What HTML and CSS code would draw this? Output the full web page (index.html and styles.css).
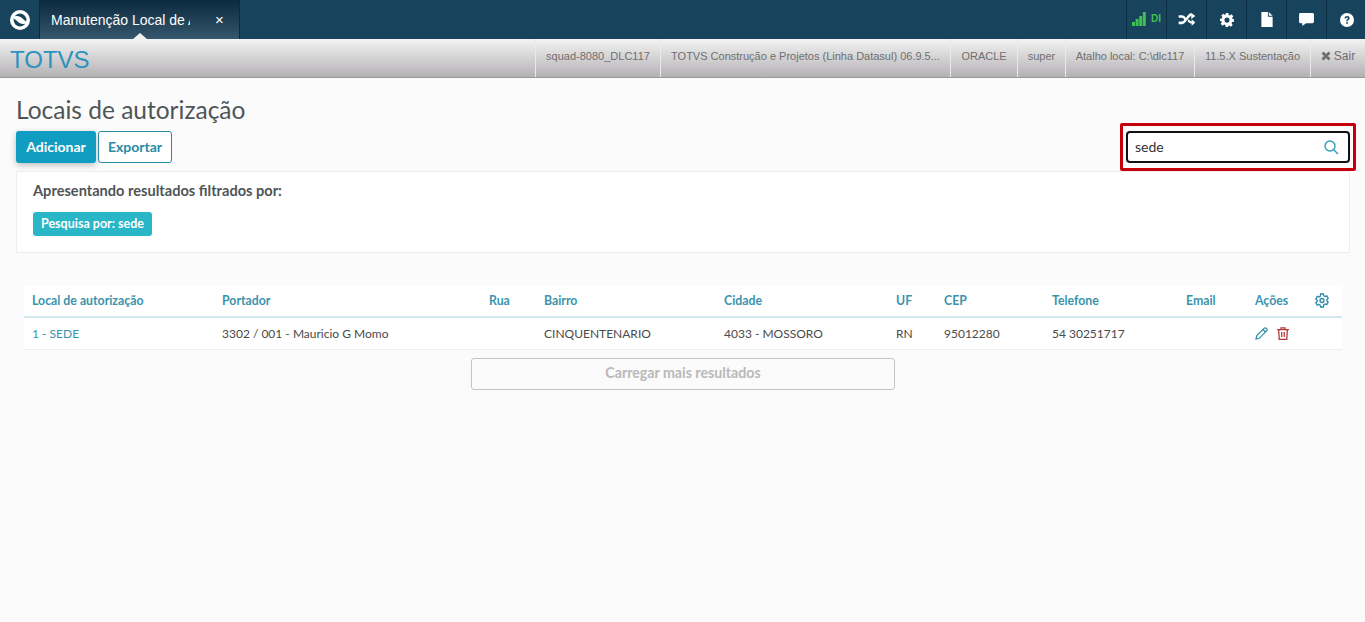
FILE: index.html
```html
<!DOCTYPE html>
<html lang="pt-BR">
<head>
    <meta charset="UTF-8">
    <title>Locais de autorização</title>
    <link rel="stylesheet" href="styles.css">
</head>
<body>
    <header class="topbar">
        <div class="logo-cell">
            <svg width="22" height="22" viewBox="0 0 22 22">
                <circle cx="11" cy="11" r="10" fill="#fff"/>
                <circle cx="11" cy="11" r="6.400" fill="#17435c"/>
                <path d="M3 8.800C7 5.800 11 7 13.500 9.500 15 11 17 12.500 19 13.200 15 16.200 11 15 8.500 12.500 7 11 5 9.500 3 8.800z" fill="#fff"/>
            </svg>
        </div>
        <div class="tab">
            <span class="tab-title">Manutenção Local de A</span>
            <span class="tab-close">×</span>
        </div>
        <div class="top-tools">
            <div class="tool signal">
                <svg width="14" height="14" viewBox="0 0 14 14" fill="#3fc04f">
                    <rect x="0" y="10" width="3" height="4"/>
                    <rect x="3.600" y="7" width="3" height="7"/>
                    <rect x="7.200" y="4" width="3" height="10"/>
                    <rect x="10.800" y="0" width="3" height="14"/>
                </svg>
                <span class="signal-text">DI</span>
            </div>
            <div class="tool">
                <svg width="18" height="13" viewBox="0 0 18 14" fill="#fff">
                    <path d="M0 2.500h3.600c1.600 0 2.600.8 3.600 2L8.600 6.300 7 8.300 5.400 6.200c-.6-.7-1-1-1.800-1H0z"/>
                    <path d="M0 9.200h3.600c.8 0 1.200-.3 1.800-1L10.500 2c1-1.200 2-1.600 3.500-1.600V3.100c-.9 0-1.300.2-1.900.9L7.200 10c-1 1.200-2 2-3.600 2H0z"/>
                    <path d="M13.600 0L18 3.200 13.600 6.400z"/>
                    <path d="M9.500 8.700l1.500-1.900 1.200 1.500c.5.600 1 .9 1.800.9V6.700L18 10.300 14 13.800v-2.400c-1.600 0-2.700-.6-3.500-1.600z"/>
                </svg>
            </div>
            <div class="tool">
                <svg width="14" height="14" viewBox="0 0 16 16" fill="#fff">
                    <path fill-rule="evenodd" d="M6.500 0h3l.4 2.200 1.300.6L13.100 1.500l2.100 2.100-1.300 1.900.6 1.300L16 7v3l-2.200.4-.6 1.300 1.300 1.900-2.100 2.100-1.900-1.300-1.300.6L9.500 16h-3l-.4-2.200-1.300-.6-1.900 1.300L.8 12.400l1.300-1.900-.6-1.300L0 9V6.500l2.200-.4.6-1.300L1.500 2.900 3.600.8l1.900 1.300 1.300-.6z M8 5.200a2.900 2.900 0 1 0 0 5.800 2.900 2.900 0 0 0 0-5.800z"/>
                </svg>
            </div>
            <div class="tool">
                <svg width="12" height="15" viewBox="0 0 12 16" fill="#fff">
                    <path d="M0 0h7v5h5v11H0z"/>
                    <path d="M8 0l4 4H8z"/>
                </svg>
            </div>
            <div class="tool">
                <svg width="15" height="13" viewBox="0 0 16 14" fill="#fff">
                    <path d="M1.500 0h13A1.500 1.500 0 0 1 16 1.500v8a1.500 1.500 0 0 1-1.500 1.500H7.500L3.500 14v-3h-2A1.500 1.500 0 0 1 0 9.500v-8A1.500 1.500 0 0 1 1.500 0z"/>
                </svg>
            </div>
            <div class="tool">
                <svg width="14" height="14" viewBox="0 0 16 16">
                    <circle cx="8" cy="8" r="8" fill="#fff"/>
                    <path d="M5.200 6.200C5.300 4.500 6.500 3.500 8.100 3.500c1.700 0 2.900 1 2.900 2.400 0 1.200-.7 1.700-1.400 2.200-.6.400-.8.700-.8 1.300H7.100c0-1.100.4-1.700 1.100-2.200.6-.4.900-.7.900-1.200 0-.5-.4-.8-1-.8-.7 0-1.100.4-1.200 1z" fill="#17435c"/>
                    <rect x="7.100" y="10.400" width="1.800" height="1.900" fill="#17435c"/>
                </svg>
            </div>
        </div>
    </header>

    <div class="infobar">
        <div class="brand">TOTVS</div>
        <ul class="info-list">
            <li class="w-squad">squad-8080_DLC117</li>
            <li class="w-company">TOTVS Construção e Projetos (Linha Datasul) 06.9.5...</li>
            <li class="w-db">ORACLE</li>
            <li class="w-user">super</li>
            <li class="w-path">Atalho local: C:\dlc117</li>
            <li class="w-version">11.5.X Sustentação</li>
            <li class="w-exit">
                <svg width="10" height="10" viewBox="0 0 10 10"><path d="M1.500 1.500l7 7M8.500 1.500l-7 7" stroke="#6d6d6d" stroke-width="2.800"/></svg>
                Sair
            </li>
        </ul>
    </div>

    <main class="page">
        <h1 class="page-title">Locais de autorização</h1>
        <div class="actions-row">
            <div class="actions">
                <button class="btn btn-primary">Adicionar</button>
                <button class="btn btn-outline">Exportar</button>
            </div>
            <div class="search">
                <span class="search-text">sede</span>
                <svg width="15" height="15" viewBox="0 0 15 15" fill="none" stroke="#2f9fb5" stroke-width="1.400">
                    <circle cx="6" cy="6" r="5"/>
                    <path d="M9.800 9.800L14 14"/>
                </svg>
                <div class="search-mark"></div>
            </div>
        </div>

        <section class="filter-card">
            <div class="filter-title">Apresentando resultados filtrados por:</div>
            <span class="filter-tag">Pesquisa por: sede</span>
        </section>

        <div class="table-wrap">
            <table class="grid">
                <colgroup>
                    <col class="c-local"><col class="c-portador"><col class="c-rua"><col class="c-bairro">
                    <col class="c-cidade"><col class="c-uf"><col class="c-cep"><col class="c-tel">
                    <col class="c-email"><col class="c-acoes"><col class="c-conf">
                </colgroup>
                <thead>
                    <tr>
                        <th>Local de autorização</th>
                        <th>Portador</th>
                        <th>Rua</th>
                        <th>Bairro</th>
                        <th>Cidade</th>
                        <th>UF</th>
                        <th>CEP</th>
                        <th>Telefone</th>
                        <th>Email</th>
                        <th>Ações</th>
                        <th>
                            <svg class="icon-block" width="14" height="15" viewBox="0 0 14 15" fill="none" stroke="#2a8ba6" stroke-width="1.300">
                                <path d="M5.600 1h2.800l.4 1.800 1.300.7 1.700-.6 1.400 2.400-1.300 1.200v1.500l1.300 1.200-1.400 2.400-1.700-.6-1.300.7L8.400 14H5.600l-.4-1.800-1.300-.7-1.700.6L.8 9.700l1.300-1.200V7L.8 5.800l1.400-2.400 1.700.6 1.300-.7z"/>
                                <circle cx="7" cy="7.500" r="2"/>
                            </svg>
                        </th>
                    </tr>
                </thead>
                <tbody>
                    <tr>
                        <td class="link">1 - SEDE</td>
                        <td>3302 / 001 - Mauricio G Momo</td>
                        <td></td>
                        <td>CINQUENTENARIO</td>
                        <td>4033 - MOSSORO</td>
                        <td>RN</td>
                        <td>95012280</td>
                        <td>54 30251717</td>
                        <td></td>
                        <td>
                            <div class="row-actions">
                                <svg width="13" height="13" viewBox="0 0 13 13" fill="none" stroke="#2a8ba6" stroke-width="1.200">
                                    <path d="M1 12l.7-3.200L9.300 1.200a1.300 1.300 0 0 1 1.800 0l.7.7a1.300 1.300 0 0 1 0 1.800L4.200 11.300z"/>
                                    <path d="M8 2.500l2.500 2.500"/>
                                </svg>
                                <svg width="12" height="13" viewBox="0 0 12 13" fill="none" stroke="#b23a3a" stroke-width="1.300">
                                    <path d="M0 2.700h12M4 2.500V.8h4v1.700M1.700 2.700l.5 9.600h7.600l.5-9.600M4.700 5v5M7.300 5v5"/>
                                </svg>
                            </div>
                        </td>
                        <td></td>
                    </tr>
                </tbody>
            </table>
            <button class="load-more">Carregar mais resultados</button>
        </div>
    </main>
</body>
</html>
```

FILE: styles.css
```css
* {
    box-sizing: border-box;
}

html, body {
    height: 100%;
}

body {
    margin: 0;
    background-color: #fbfbfb;
    color: #4a4a4a;
    font-family: 'Lato', 'Noto Sans', sans-serif;
    overflow: hidden;
}

/* barra superior */
.topbar {
    display: flex;
    height: 39px;
    background-color: #17435c;
}

.logo-cell {
    display: flex;
    align-items: center;
    justify-content: center;
    width: 40px;
    border-right: 1px solid #0d2a3c;
}

.tab {
    display: flex;
    align-items: center;
    position: relative;
    width: 200px;
    padding-left: 11px;
    border-right: 1px solid #0d2a3c;
    background: linear-gradient(to bottom, #0b2a3f, #35566c);
    color: #fff;
    font-family: 'Liberation Sans', Arial, sans-serif;
    font-size: 14px;
}

.tab::after {
    content: '';
    position: absolute;
    left: 93px;
    bottom: 0;
    border-left: 7px solid transparent;
    border-right: 7px solid transparent;
    border-bottom: 6px solid #f1f1f1;
}

.tab-title {
    width: 139px;
    overflow: hidden;
    white-space: nowrap;
}

.tab-close {
    margin-left: 25px;
    font-size: 15px;
}

.top-tools {
    display: flex;
    margin-left: auto;
    margin-right: -1px;
}

.tool {
    display: flex;
    align-items: center;
    justify-content: center;
    width: 40px;
    border-left: 1px solid #0d2f44;
}

.signal {
    gap: 5px;
    padding-bottom: 2px;
}

.signal-text {
    color: #3fc04f;
    font-family: 'Liberation Sans', Arial, sans-serif;
    font-size: 10px;
    font-weight: bold;
}

/* barra de informacoes */
.infobar {
    display: flex;
    height: 39px;
    border-bottom: 1px solid #999;
    background: linear-gradient(to bottom, #f3f3f3, #b4b1b4);
    font-family: 'Liberation Sans', Arial, sans-serif;
}

.brand {
    padding: 5px 0 0 10px;
    color: #2b93be;
    font-size: 24px;
    line-height: 32px;
}

.info-list {
    display: flex;
    margin: 0 0 0 auto;
    padding: 0;
    list-style: none;
    color: #6f6f6f;
    font-size: 11px;
}

.info-list li {
    display: flex;
    align-items: center;
    justify-content: center;
    gap: 3px;
    padding-bottom: 4px;
    border-left: 1px solid #e9e9e9;
    white-space: nowrap;
}

.w-squad { width: 125px; }
.w-company { width: 290px; }
.w-db { width: 67px; }
.w-user { width: 48px; }
.w-path { width: 129px; }
.w-version { width: 116px; }
.w-exit { width: 55px; font-size: 12px; }

/* conteudo */
.page {
    padding: 0 15px 0 16px;
}

.page-title {
    margin: 0;
    padding-top: 18px;
    color: #4f5557;
    font-size: 24.500px;
    font-weight: 400;
    line-height: 28px;
}

.actions-row {
    display: flex;
    align-items: center;
    justify-content: space-between;
    margin-top: 7px;
    height: 32px;
}

.actions {
    display: flex;
    gap: 2px;
}

.btn {
    height: 32px;
    border-radius: 3px;
    font-family: inherit;
    font-size: 14px;
    font-weight: 700;
    padding: 0 0 2px;
}

.btn-primary {
    width: 80px;
    border: none;
    background-color: #119dc1;
    color: #fff;
    box-shadow: 0 2px 6px rgba(0, 0, 0, 0.25);
}

.btn-outline {
    width: 74px;
    border: 1px solid #2a8ba6;
    background-color: #fff;
    color: #2a8ba6;
}

.search {
    display: flex;
    align-items: center;
    justify-content: space-between;
    position: relative;
    width: 224px;
    height: 32px;
    padding: 0 9px 0 7px;
    border: 2px solid #111;
    border-radius: 4px;
    background-color: #fff;
}

.search-text {
    margin-bottom: 2px;
    color: #333;
    font-size: 14px;
}

.search-mark {
    position: absolute;
    top: -10px;
    left: -8px;
    right: -8px;
    bottom: -10px;
    border: 3px solid #c6000b;
    border-radius: 2px;
}

.filter-card {
    height: 82px;
    margin-top: 8px;
    padding: 10px 16px 0;
    border: 1px solid #eee;
    background-color: #fff;
}

.filter-title {
    color: #4f5557;
    font-size: 14.600px;
    font-weight: 700;
    line-height: 18px;
}

.filter-tag {
    display: inline-block;
    margin-top: 12px;
    padding: 0 8px 1px;
    border-radius: 3px;
    background-color: #29b6c6;
    color: #fff;
    font-size: 12.500px;
    font-weight: 700;
    line-height: 23px;
}

.table-wrap {
    margin: 32px 8px 0;
    width: 1318px;
}

.grid {
    width: 100%;
    table-layout: fixed;
    border-collapse: collapse;
    background-color: #fff;
    font-size: 12px;
}

.c-local { width: 190px; }
.c-portador { width: 267px; }
.c-rua { width: 55px; }
.c-bairro { width: 180px; }
.c-cidade { width: 172px; }
.c-uf { width: 48px; }
.c-cep { width: 108px; }
.c-tel { width: 134px; }
.c-email { width: 69px; }
.c-acoes { width: 60px; }

.grid th {
    height: 32px;
    padding: 0 0 0 8px;
    border-bottom: 2px solid #d3e8ee;
    color: #3a94ad;
    font-size: 12.300px;
    font-weight: 700;
    text-align: left;
}

.grid td {
    height: 32px;
    padding: 0 0 0 8px;
    border-bottom: 1px solid #eee;
    color: #4a4a4a;
}

.grid td.link {
    color: #3a94ad;
}

.icon-block {
    display: block;
}

.row-actions {
    display: flex;
    align-items: center;
    gap: 9px;
}

.load-more {
    display: block;
    width: 424px;
    height: 32px;
    margin: 8px auto 0;
    padding: 0 0 2px;
    border: 1px solid #c4c4c4;
    border-radius: 3px;
    background-color: #fbfbfb;
    color: #b9b9b9;
    font-family: inherit;
    font-size: 14.200px;
    font-weight: 700;
}
```
